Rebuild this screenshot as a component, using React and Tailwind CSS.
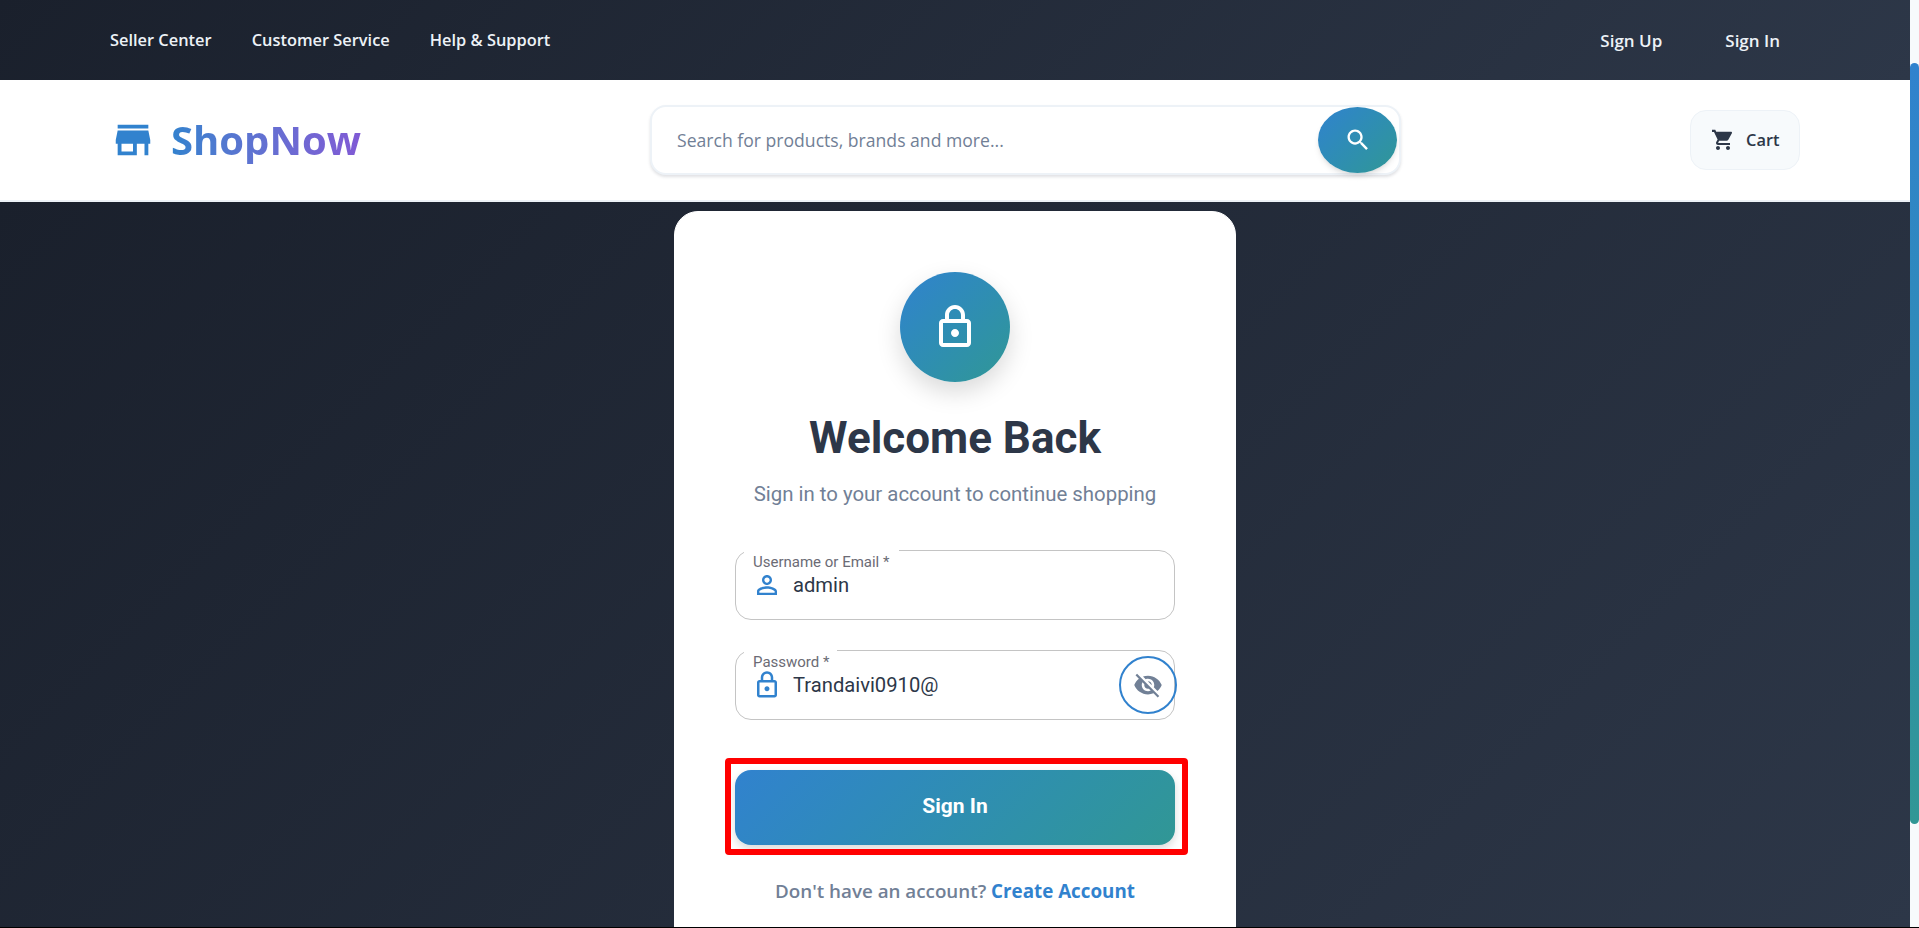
import React from 'react';

const UI_FONT = 'font-["Open_Sans","Noto_Sans",sans-serif]';

const Icon = ({ d, className }) => (
  <svg viewBox="0 0 24 24" fill="currentColor" className={className}>
    <path d={d} />
  </svg>
);

const paths = {
  store: 'M20 4H4v2h16V4zm1 10v-2l-1-5H4l-1 5v2h1v6h10v-6h4v6h2v-6h1zm-9 4H6v-4h6v4z',
  search: 'M15.5 14h-.79l-.28-.27C15.41 12.59 16 11.11 16 9.5 16 5.91 13.09 3 9.5 3S3 5.91 3 9.5 5.91 16 9.5 16c1.61 0 3.09-.59 4.23-1.57l.27.28v.79l5 4.99L20.49 19l-4.99-5zm-6 0C7.01 14 5 11.99 5 9.5S7.01 5 9.5 5 14 7.01 14 9.5 11.99 14 9.5 14z',
  cart: 'M7 18c-1.1 0-1.99.9-1.99 2S5.9 22 7 22s2-.9 2-2-.9-2-2-2zM1 2v2h2l3.6 7.59-1.35 2.45c-.16.28-.25.61-.25.96 0 1.1.9 2 2 2h12v-2H7.42c-.14 0-.25-.11-.25-.25l.03-.12.9-1.83h7.45c.75 0 1.41-.41 1.75-1.03l3.58-6.49c.08-.14.12-.31.12-.48 0-.55-.45-1-1-1H5.21l-.94-2H1zm16 16c-1.1 0-1.99.9-1.99 2s.89 2 1.99 2 2-.9 2-2-.9-2-2-2z',
  lock: 'M18 8h-1V6c0-2.76-2.24-5-5-5S7 3.24 7 6v2H6c-1.1 0-2 .9-2 2v10c0 1.1.9 2 2 2h12c1.1 0 2-.9 2-2V10c0-1.1-.9-2-2-2zM9 6c0-1.66 1.34-3 3-3s3 1.34 3 3v2H9V6zm9 14H6V10h12v10zm-6-3c1.1 0 2-.9 2-2s-.9-2-2-2-2 .9-2 2 .9 2 2 2z',
  person: 'M12 5.9c1.16 0 2.1.94 2.1 2.1s-.94 2.1-2.1 2.1S9.9 9.16 9.9 8s.94-2.1 2.1-2.1m0 9c2.97 0 6.1 1.46 6.1 2.1v1.1H5.9V17c0-.64 3.13-2.1 6.1-2.1M12 4C9.79 4 8 5.79 8 8s1.79 4 4 4 4-1.79 4-4-1.79-4-4-4zm0 9c-2.67 0-8 1.34-8 4v3h16v-3c0-2.66-5.33-4-8-4z',
  eyeOff: 'M12 7c2.76 0 5 2.24 5 5 0 .65-.13 1.26-.36 1.83l2.92 2.92c1.51-1.26 2.7-2.89 3.43-4.75-1.73-4.39-6-7.5-11-7.5-1.4 0-2.74.25-3.98.7l2.16 2.16C10.74 7.13 11.35 7 12 7zM2 4.27l2.28 2.28.46.46C3.08 8.3 1.78 10.02 1 12c1.73 4.39 6 7.5 11 7.5 1.55 0 3.03-.3 4.38-.84l.42.42L19.73 22 21 20.73 3.27 3 2 4.27zM7.53 9.8l1.55 1.55c-.05.21-.08.43-.08.65 0 1.66 1.34 3 3 3 .22 0 .44-.03.65-.08l1.55 1.55c-.67.33-1.41.53-2.2.53-2.76 0-5-2.24-5-5 0-.79.2-1.53.53-2.2zm4.31-.78l3.15 3.15.02-.16c0-1.66-1.34-3-3-3l-.17.01z',
};

const Field = ({ label, notch, icon, value, children }) => (
  <div className="relative h-[70px] rounded-2xl border border-[#c4c4c4] bg-white">
    {/* label sits in a gap of the outline */}
    <span className={`absolute top-[-1px] left-2 h-[3px] bg-white ${notch}`} />
    <label className="absolute top-[2px] left-[17px] text-[15px] leading-[18px] text-[#6b6b75]">{label}</label>
    <div className="flex h-full items-center pl-4">
      <Icon d={icon} className="h-[30px] w-[30px] shrink-0 text-[#3182ce]" />
      <input
        readOnly
        value={value}
        className="ml-[11px] h-[30px] flex-1 bg-transparent text-[20.2px] leading-[30px] text-[#2d3748] outline-none"
      />
    </div>
    {children}
  </div>
);

export default function App() {
  return (
    <div className={`flex h-screen flex-col overflow-hidden bg-black ${UI_FONT}`}>
      <div className="flex min-h-0 flex-1">
        <div className="flex min-w-0 flex-1 flex-col">
          {/* Top bar */}
          <div className="flex h-20 shrink-0 items-center justify-between bg-linear-135 from-[#1a202c] to-[#2d3748] px-[110px] pt-px text-[16.4px] font-semibold text-[#edf2f7]">
            <div className="flex gap-10">
              <a>Seller Center</a>
              <a>Customer Service</a>
              <a>Help &amp; Support</a>
            </div>
            <div className="flex gap-[23px] text-[17px]">
              <a className="px-5">Sign Up</a>
              <a className="px-5">Sign In</a>
            </div>
          </div>

          {/* Header */}
          <div className="flex h-[122px] shrink-0 items-center justify-between border-b-2 border-[#edf2f7] bg-white px-[110px]">
            <div className="flex w-[540px] items-center">
              <Icon d={paths.store} className="h-[46px] w-[46px] text-[#3182ce]" />
              <span className="mt-[3px] ml-[15px] bg-gradient-to-r from-[#3182ce] to-[#805ad5] bg-clip-text pb-1 text-[40px] leading-none font-bold text-transparent">
                ShopNow
              </span>
            </div>
            <div className="flex h-[70px] w-[751px] items-center rounded-2xl border-2 border-[#edf2f7] bg-white pr-[2px] pl-[25px] shadow-[0_2px_3px_rgba(45,55,72,0.15)]">
              <input
                readOnly
                placeholder="Search for products, brands and more..."
                className="min-w-0 flex-1 bg-transparent text-[17.6px] text-[#2d3748] outline-none placeholder:text-[#718096]"
              />
              <button className="flex h-[66px] w-[79px] items-center justify-center rounded-[50%] bg-linear-135 from-[#3182ce] to-[#319795] text-white shadow-md">
                <Icon d={paths.search} className="h-7 w-7" />
              </button>
            </div>
            <div className="flex w-[399px] justify-end">
              <button className="flex h-[60px] w-[110px] items-center rounded-2xl border border-[#edf2f7] bg-[#f7fafc] pl-5 text-[16.4px] font-semibold text-[#2d3748]">
                <Icon d={paths.cart} className="h-6 w-6" />
                <span className="ml-[11px]">Cart</span>
              </button>
            </div>
          </div>

          {/* Login card */}
          <div className="flex min-h-0 flex-1 justify-center bg-linear-135 from-[#1a202c] to-[#2d3748] pt-[9px]">
            <div className="h-[900px] w-[562px] shrink-0 rounded-3xl border border-white bg-white px-[60px] pt-[60px] font-['Roboto',sans-serif]">
              <div className="mx-auto flex h-[110px] w-[110px] items-center justify-center rounded-full bg-linear-135 from-[#3182ce] to-[#319795] text-white shadow-[0_10px_25px_rgba(0,0,0,0.15)]">
                <Icon d={paths.lock} className="h-12 w-12" />
              </div>
              <h1 className="mt-[30px] text-center text-[44px] leading-[52px] font-bold text-[#2d3748]">Welcome Back</h1>
              <p className="mt-[18px] text-center text-[20.4px] leading-6 text-[#718096]">
                Sign in to your account to continue shopping
              </p>

              <div className="mt-11 flex flex-col gap-[30px]">
                <Field label="Username or Email *" notch="w-[155px]" icon={paths.person} value="admin" />
                <Field label="Password *" notch="w-[93px]" icon={paths.lock} value="Trandaivi0910@">
                  <button className="absolute top-[5px] right-[-3px] flex h-[58px] w-[58px] items-center justify-center rounded-full border-2 border-[#3182ce] text-[#718096]">
                    <Icon d={paths.eyeOff} className="h-[30px] w-[30px]" />
                  </button>
                </Field>
              </div>

              <div className="relative mt-[50px]">
                <button className="h-[75px] w-full rounded-2xl bg-linear-135 from-[#3182ce] to-[#319795] pb-0.5 text-[21px] font-bold text-white shadow-[0_4px_8px_rgba(0,0,0,0.15)]">
                  Sign In
                </button>
                {/* red highlight drawn over the button */}
                <span className="absolute -top-3 -right-[13px] -bottom-[10px] -left-[10px] rounded-sm border-[6px] border-[#ff0000]" />
              </div>

              <p className={`mt-[34px] text-center text-[18.8px] leading-6 font-semibold text-[#718096] ${UI_FONT}`}>
                Don't have an account? <a className="font-bold text-[#3182ce]">Create Account</a>
              </p>
            </div>
          </div>
        </div>

        {/* Scrollbar */}
        <div className="w-[9px] shrink-0 bg-[#f7fafc] pt-[63px]">
          <div className="h-[761px] rounded-md bg-gradient-to-b from-[#3182ce] to-[#319795]" />
        </div>
      </div>
      <div className="h-px shrink-0 bg-black" />
    </div>
  );
}
